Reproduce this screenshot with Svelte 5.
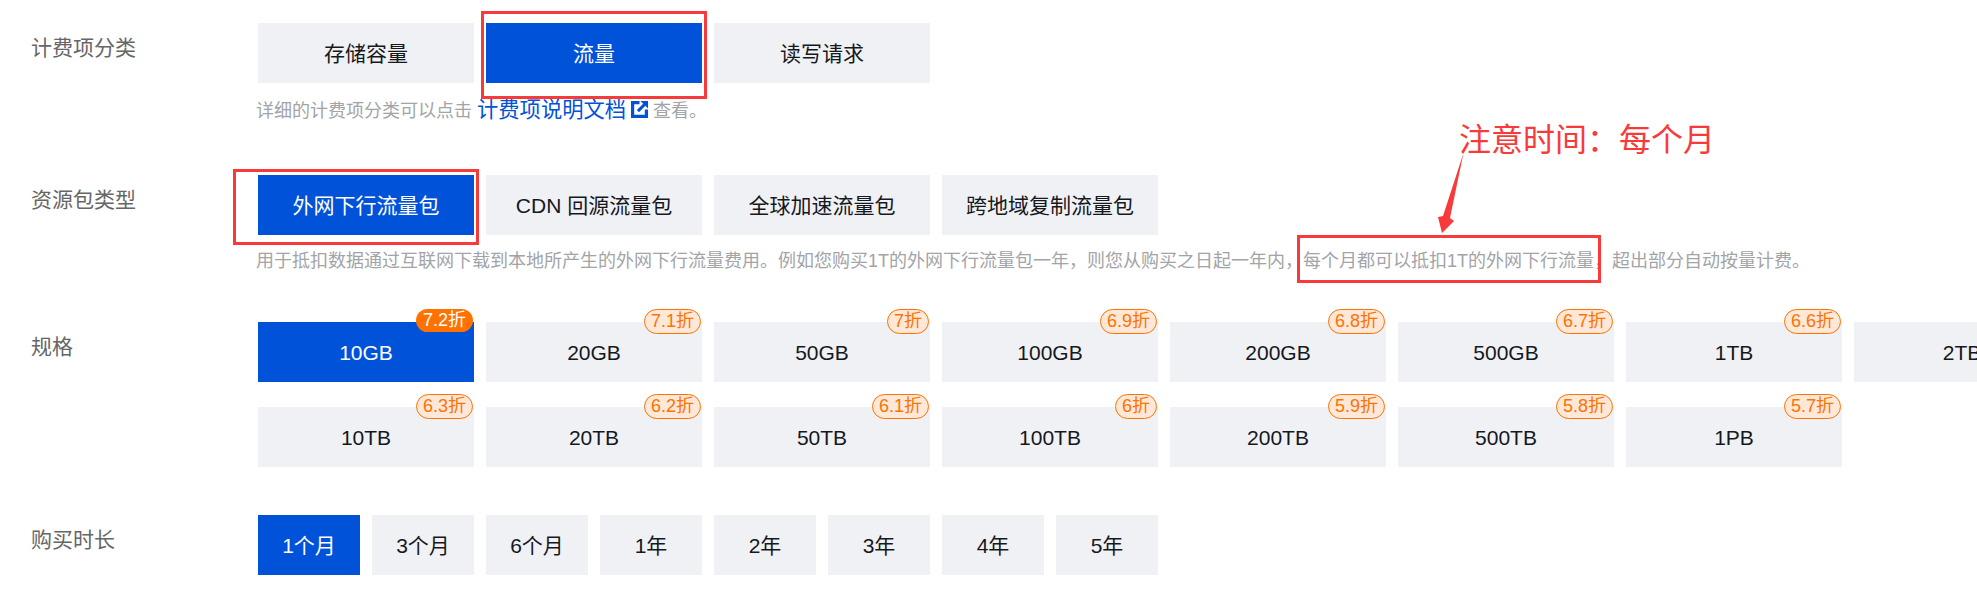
<script>
  const tabs = ['存储容量', '流量', '读写请求'];
  const packs = ['外网下行流量包', 'CDN 回源流量包', '全球加速流量包', '跨地域复制流量包'];
  const specs = [
    ['10GB', '7.2折'], ['20GB', '7.1折'], ['50GB', '7折'], ['100GB', '6.9折'],
    ['200GB', '6.8折'], ['500GB', '6.7折'], ['1TB', '6.6折'], ['2TB', '6.5折'],
    ['10TB', '6.3折'], ['20TB', '6.2折'], ['50TB', '6.1折'], ['100TB', '6折'],
    ['200TB', '5.9折'], ['500TB', '5.8折'], ['1PB', '5.7折']
  ];
  const durations = ['1个月', '3个月', '6个月', '1年', '2年', '3年', '4年', '5年'];
</script>

<main class="page">
  <section class="row first">
    <div class="label">计费项分类</div>
    <div class="body">
      <div class="options">
        {#each tabs as t, i}
          <div class="opt" class:on={i === 1}>{t}</div>
        {/each}
      </div>
      <p class="help">详细的计费项分类可以点击 <a href="#doc">计费项说明文档<svg class="ext" viewBox="0 0 16 16"><path d="M0 0H8V3H3V13H13V8H16V16H0z"/><path d="M9 0H16V7L13.5 4.5 7.5 10.5 5.5 8.5 11.5 2.5z"/></svg></a> 查看。</p>
    </div>
  </section>

  <section class="row second">
    <div class="label">资源包类型</div>
    <div class="body">
      <div class="options">
        {#each packs as p, i}
          <div class="opt" class:on={i === 0}>{p}</div>
        {/each}
      </div>
      <p class="help">用于抵扣数据通过互联网下载到本地所产生的外网下行流量费用。例如您购买1T的外网下行流量包一年&#xFF0C;则您从购买之日起一年内&#xFF0C;每个月都可以抵扣1T的外网下行流量&#xFF0C;超出部分自动按量计费。</p>
    </div>
  </section>

  <section class="row third">
    <div class="label">规格</div>
    <div class="body">
      <div class="options specs">
        {#each specs as [name, off], i}
          <div class="opt" class:on={i === 0}>
            {name}
            <span class="badge">{off}</span>
          </div>
        {/each}
      </div>
    </div>
  </section>

  <section class="row fourth">
    <div class="label">购买时长</div>
    <div class="body">
      <div class="options small">
        {#each durations as d, i}
          <div class="opt" class:on={i === 0}>{d}</div>
        {/each}
      </div>
    </div>
  </section>

  <!-- red annotations drawn on top of the screenshot -->
  <div class="mark m1"></div>
  <div class="mark m2"></div>
  <div class="mark m3"></div>
  <div class="note">注意时间&#xFF1A;每个月</div>
  <svg class="arrow" viewBox="0 0 40 90"><path d="M25.5 0 12 65 16 68 4 80 0 64 5 63z"/></svg>
</main>

<style>
  :global(body) {
    margin: 0;
    background: #fff;
    overflow: hidden;
  }
  .page {
    position: relative;
    width: 1977px;
    height: 614px;
    overflow: hidden;
    font-family: "Liberation Sans", "Noto Sans CJK SC", sans-serif;
    font-size: 21px;
    color: #15181d;
  }
  .row {
    display: flex;
    padding-left: 31px;
  }
  .first { padding-top: 23px; }
  .second { padding-top: 54px; }
  .third { padding-top: 49px; }
  .fourth { padding-top: 48px; }
  .label {
    width: 227px;
    flex: none;
    color: #666;
    line-height: 50px;
  }
  .options {
    display: flex;
    gap: 12px;
  }
  .specs {
    display: grid;
    grid-template-columns: repeat(8, 216px);
    gap: 25px 12px;
  }
  .opt {
    position: relative;
    width: 216px;
    height: 60px;
    line-height: 62px;
    text-align: center;
    background: #f0f1f5;
    white-space: nowrap;
  }
  .small .opt { width: 102px; }
  .opt.on {
    background: #0052d9;
    color: #fff;
  }
  .help {
    margin: 14px 0 0 -2px;
    height: 24px;
    font-size: 18px;
    line-height: 24px;
    color: #a2a4a8;
    white-space: nowrap;
  }
  .first .help {
    margin-top: 15px;
    height: 23px;
  }
  .help a {
    font-size: 21.3px;
    color: #0052d9;
    text-decoration: none;
  }
  .ext {
    width: 17px;
    height: 17px;
    margin-left: 5px;
    vertical-align: -1px;
    fill: #0052d9;
  }
  .badge {
    position: absolute;
    top: -13px;
    right: 1px;
    height: 23px;
    line-height: 23px;
    padding: 0 6px;
    border: 1px solid #ff7200;
    border-radius: 13px;
    background: #ffe8d8;
    color: #ff7200;
    font-size: 18px;
  }
  .on .badge {
    height: 23px;
    border: 0;
    padding: 0 7px;
    background: #ff7200;
    color: #fff;
  }
  .mark {
    position: absolute;
    box-sizing: border-box;
    border: 3px solid #f93a3a;
  }
  .m1 { left: 481px; top: 11px; width: 226px; height: 88px; }
  .m2 { left: 233px; top: 169px; width: 246px; height: 76px; }
  .m3 { left: 1297px; top: 235px; width: 304px; height: 48px; }
  .note {
    position: absolute;
    left: 1459px;
    top: 120px;
    font-size: 32px;
    line-height: 40px;
    color: #f93a3a;
    white-space: nowrap;
  }
  .arrow {
    position: absolute;
    left: 1438px;
    top: 153px;
    width: 40px;
    height: 90px;
    fill: #f93a3a;
  }
</style>
